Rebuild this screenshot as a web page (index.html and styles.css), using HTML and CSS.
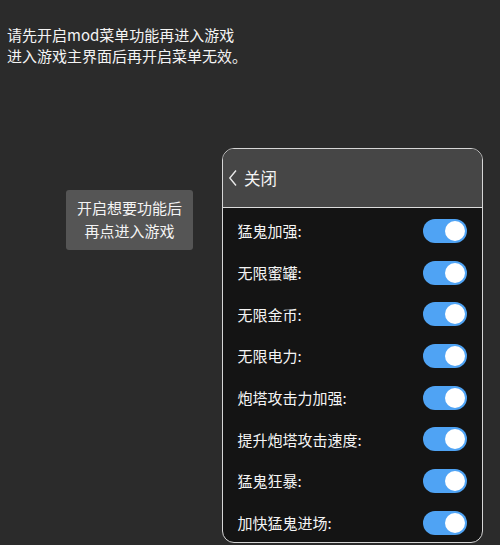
FILE: index.html
```html
<!DOCTYPE html>
<html lang="zh">
<head>
<meta charset="utf-8">
<link rel="stylesheet" href="styles.css">
</head>
<body>
<div class="notice">
  <div>请先开启mod菜单功能再进入游戏</div>
  <div>进入游戏主界面后再开启菜单无效。</div>
</div>
<div class="stage">
  <div class="tip">开启想要功能后<br>再点进入游戏</div>
  <div class="panel">
    <div class="panel-head">
      <svg class="chev" width="10" height="18" viewBox="0 0 10 18"><path d="M8 1.5 L1.8 9 L8 16.5" fill="none" stroke="#e8e8e8" stroke-width="1.4"/></svg>
      <span class="head-title">关闭</span>
    </div>
    <div class="list">
      <div class="row"><span class="label">猛鬼加强:</span><span class="toggle"><span class="knob"></span></span></div>
      <div class="row"><span class="label">无限蜜罐:</span><span class="toggle"><span class="knob"></span></span></div>
      <div class="row"><span class="label">无限金币:</span><span class="toggle"><span class="knob"></span></span></div>
      <div class="row"><span class="label">无限电力:</span><span class="toggle"><span class="knob"></span></span></div>
      <div class="row"><span class="label">炮塔攻击力加强:</span><span class="toggle"><span class="knob"></span></span></div>
      <div class="row"><span class="label">提升炮塔攻击速度:</span><span class="toggle"><span class="knob"></span></span></div>
      <div class="row"><span class="label">猛鬼狂暴:</span><span class="toggle"><span class="knob"></span></span></div>
      <div class="row"><span class="label">加快猛鬼进场:</span><span class="toggle"><span class="knob"></span></span></div>
    </div>
  </div>
</div>
</body>
</html>
```
FILE: styles.css
```css
html, body {
  margin: 0;
  padding: 0;
  background: #2b2b2b;
  width: 500px;
  height: 545px;
  overflow: hidden;
  font-family: "Noto Sans CJK SC", "Noto Sans", sans-serif;
  color: #f4f4f4;
}
.notice {
  padding: 24px 0 0 7px;
  font-size: 15px;
  line-height: 21px;
  height: 42px;
}
.stage {
  display: flex;
  align-items: flex-start;
  margin-top: 82px;
}
.tip {
  margin-left: 66px;
  margin-top: 42px;
  width: 127px;
  height: 60px;
  box-sizing: border-box;
  padding-top: 6px;
  background: #555555;
  border-radius: 3px;
  text-align: center;
  font-size: 15px;
  line-height: 23px;
  color: #f4f4f4;
}
.panel {
  margin-left: 29px;
  width: 261px;
  height: 395px;
  box-sizing: border-box;
  border: 1.5px solid #d6d6d6;
  border-radius: 12px;
  overflow: hidden;
  background: #141414;
}
.panel-head {
  height: 58px;
  background: #464646;
  border-bottom: 1.5px solid #dcdcdc;
  display: flex;
  align-items: center;
  padding-left: 5px;
}
.chev {
  display: block;
  margin-right: 6px;
}
.head-title {
  font-size: 16.5px;
  color: #f4f4f4;
}
.list {
  padding-top: 2px;
}
.row {
  height: 41.7px;
  display: flex;
  align-items: center;
  justify-content: space-between;
  padding: 0 15px 0 14.5px;
}
.label {
  font-size: 15px;
  color: #f4f4f4;
}
.toggle {
  width: 44px;
  height: 24px;
  border-radius: 12px;
  background: #4fa3f4;
  display: flex;
  align-items: center;
  justify-content: flex-end;
  padding-right: 2px;
  box-sizing: border-box;
}
.knob {
  width: 20px;
  height: 20px;
  border-radius: 50%;
  background: #ffffff;
}
```
